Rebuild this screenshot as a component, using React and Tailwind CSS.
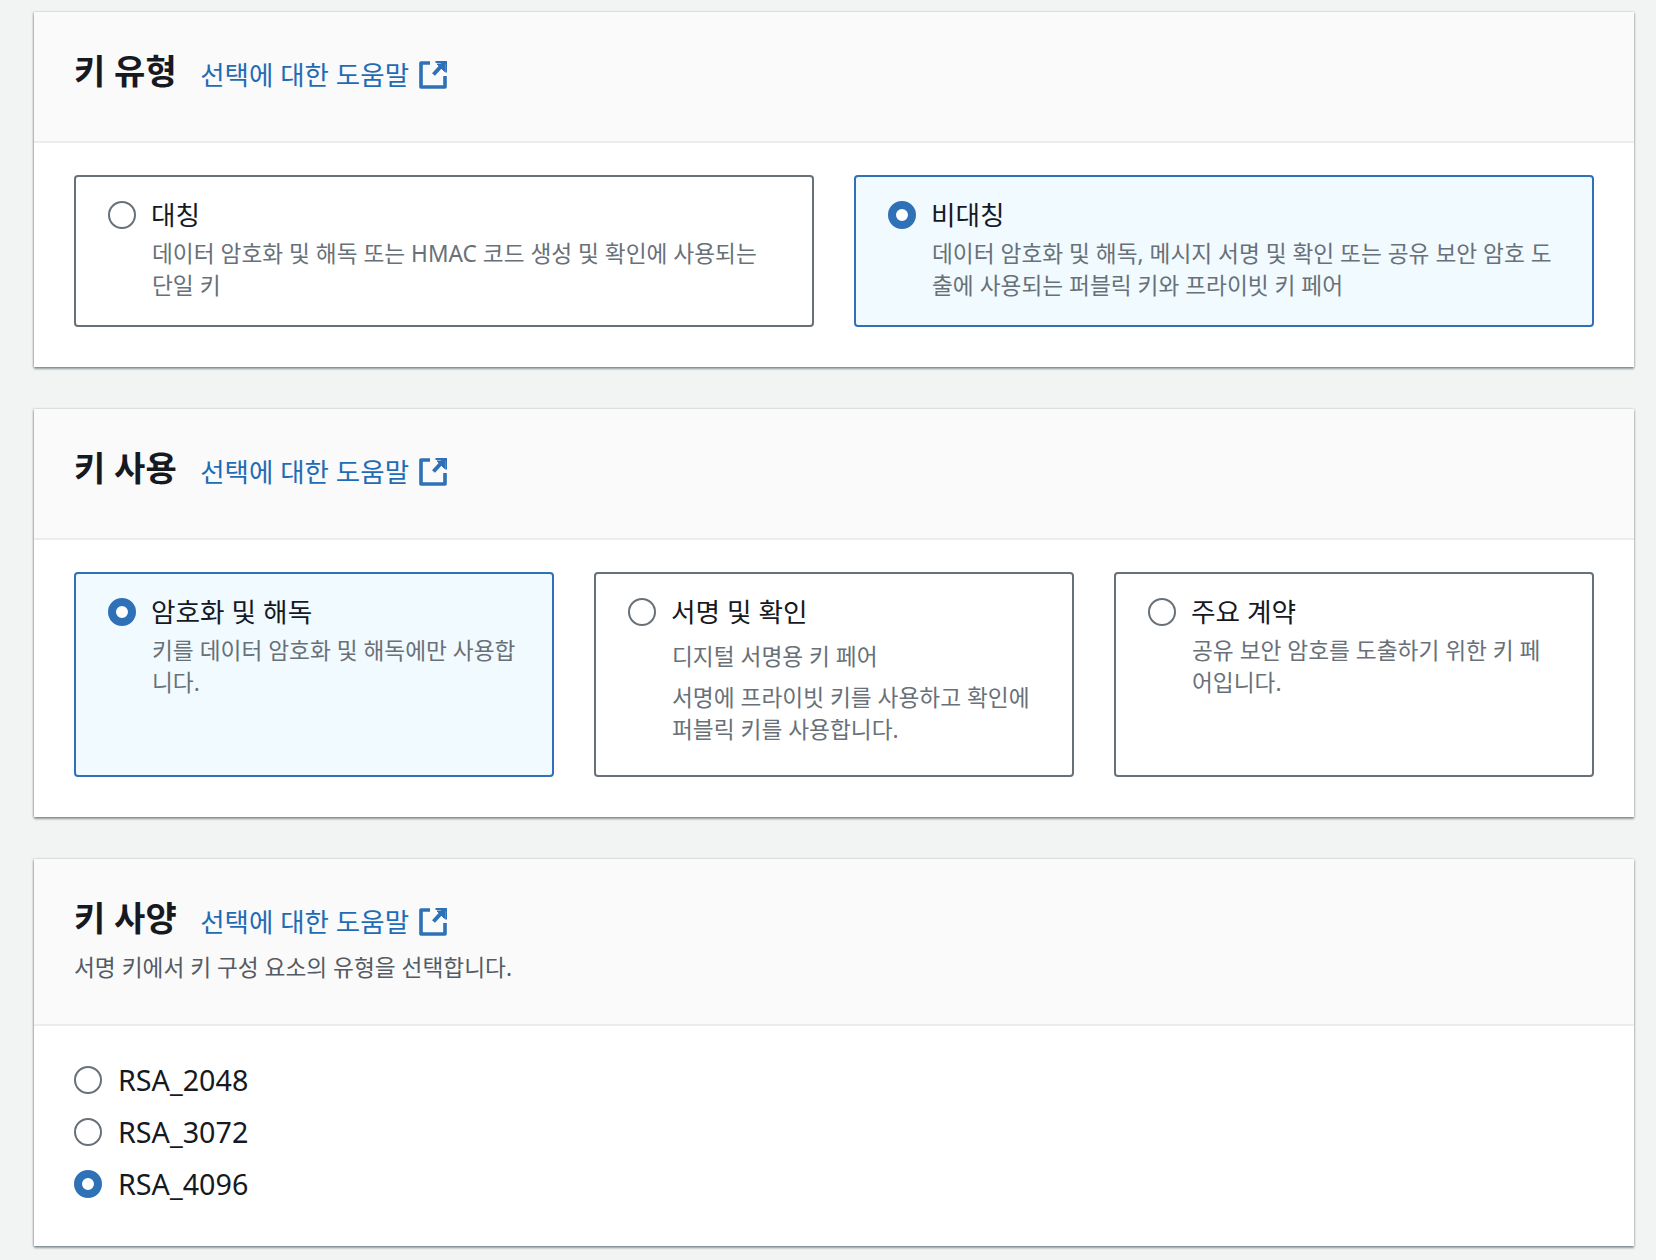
const font = { fontFamily: '"Noto Sans", "Noto Sans CJK KR", sans-serif' };

function Radio({ on }) {
  return on ? (
    <span className="block w-7 h-7 shrink-0 rounded-full border-[8px] border-[#2f71b7] bg-white" />
  ) : (
    <span className="block w-7 h-7 shrink-0 rounded-full border-2 border-[#687078] bg-white" />
  );
}

function ExternalIcon() {
  return (
    <svg width="28" height="28" viewBox="0 0 28 28" fill="none" stroke="#2f71b7" strokeWidth="3.6" strokeLinejoin="round" className="shrink-0 block">
      <path d="M11 2H2v24h24V15" />
      <path d="M26 1L14.5 13.5" strokeWidth="4" />
      <path d="M16.5 0H28v11.5H26.2V2H16.5Z" fill="#2f71b7" strokeWidth="0" />
      <path d="M18 3h7.5v7.5z" fill="#2f71b7" strokeWidth="1" />
    </svg>
  );
}

function Header({ title, sub, cls }) {
  return (
    <div className={`bg-[#fafafa] border-b-2 border-[#eaeded] px-10 ${cls}`}>
      <div className="flex items-center">
        <h2 className="text-[34px] leading-[44px] font-bold text-[#16191f] m-0 -mt-[3px]">{title}</h2>
        <a className="ml-[23.5px] mt-[5px] text-[26.5px] leading-[36px] text-[#1f6cb5]">선택에 대한 도움말</a>
        <span className="ml-[10px] mt-[5px]"><ExternalIcon /></span>
      </div>
      {sub && <p className="mt-[12px] text-[22.7px] leading-[32px] text-[#545b64]">{sub}</p>}
    </div>
  );
}

function Tile({ on, label, children, className = "" }) {
  return (
    <div className={`flex gap-[16px] rounded-[4px] border-2 px-8 pt-[20px] ${on ? "border-[#2f71b7] bg-[#f1faff]" : "border-[#687078] bg-white"} ${className}`}>
      <span className="mt-[4px]"><Radio on={on} /></span>
      <div className="min-w-0">
        <div className="text-[26.7px] leading-[34px] text-[#16191f] mt-px -ml-px">{label}</div>
        <div className="text-[22.7px] leading-[32px] text-[#687078] mt-[6px]">{children}</div>
      </div>
    </div>
  );
}

function Card({ children }) {
  return <section className="bg-white shadow-[0_2px_2px_rgba(0,28,36,0.4),-1px_0_2px_rgba(0,28,36,0.2),1px_0_2px_rgba(0,28,36,0.1)]">{children}</section>;
}

export default function App() {
  return (
    <div style={font} className="min-h-[1260px] bg-[#f2f3f3] pt-3 pl-[34px] pr-[22px] flex flex-col gap-[42px]">
      <Card>
        <Header title="키 유형" cls="h-[131px] pt-[40px]" />
        <div className="px-10 pt-[32px] pb-10 grid grid-cols-2 gap-10">
          <Tile label="대칭" className="h-[152px]">데이터 암호화 및 해독 또는 HMAC 코드 생성 및 확인에 사용되는 단일 키</Tile>
          <Tile on label="비대칭" className="h-[152px]">데이터 암호화 및 해독, 메시지 서명 및 확인 또는 공유 보안 암호 도출에 사용되는 퍼블릭 키와 프라이빗 키 페어</Tile>
        </div>
      </Card>
      <Card>
        <Header title="키 사용" cls="h-[131px] pt-[40px]" />
        <div className="px-10 pt-[32px] pb-10 grid grid-cols-3 gap-10">
          <Tile on label="암호화 및 해독" className="h-[205px]">키를 데이터 암호화 및 해독에만 사용합니다.</Tile>
          <Tile label="서명 및 확인" className="h-[205px]">
            <p className="mt-[12px]">디지털 서명용 키 페어</p>
            <p className="mt-[9px]">서명에 프라이빗 키를 사용하고 확인에 퍼블릭 키를 사용합니다.</p>
          </Tile>
          <Tile label="주요 계약" className="h-[205px]">공유 보안 암호를 도출하기 위한 키 페어입니다.</Tile>
        </div>
      </Card>
      <Card>
        <Header title="키 사양" sub="서명 키에서 키 구성 요소의 유형을 선택합니다." cls="h-[167px] pt-[40px]" />
        <div className="px-10 pt-[40px] pb-[48px] flex flex-col gap-[24px]">
          {[["RSA_2048", false], ["RSA_3072", false], ["RSA_4096", true]].map(([t, on]) => (
            <label key={t} className="flex items-center gap-[16px] h-7 text-[28.7px] leading-[28px] text-[#16191f]">
              <Radio on={on} />
              <span>{t}</span>
            </label>
          ))}
        </div>
      </Card>
    </div>
  );
}
